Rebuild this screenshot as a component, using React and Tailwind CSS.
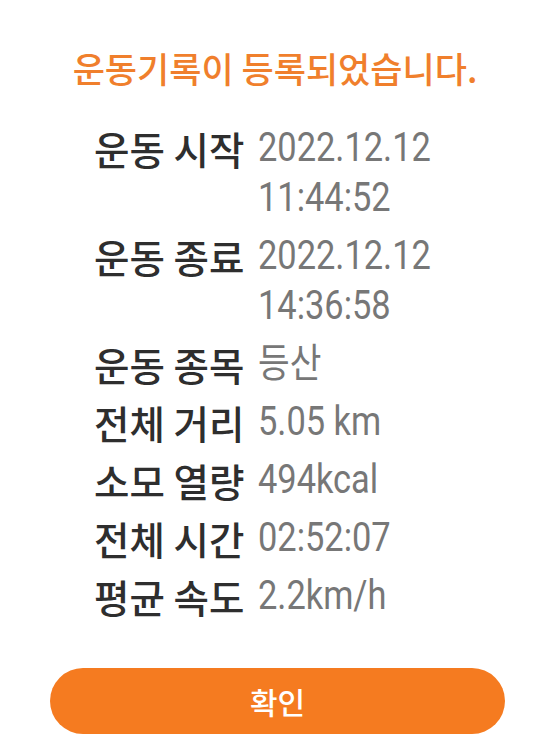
import React from 'react';

const rows = [
  { label: '운동 시작', value: ['2022.12.12', '11:44:52'] },
  { label: '운동 종료', value: ['2022.12.12', '14:36:58'] },
  { label: '운동 종목', value: ['등산'] },
  { label: '전체 거리', value: ['5.05 km'] },
  { label: '소모 열량', value: ['494kcal'] },
  { label: '전체 시간', value: ['02:52:07'] },
  { label: '평균 속도', value: ['2.2km/h'] },
];

export default function App() {
  return (
    <div className="w-[550px] h-[752px] bg-white flex flex-col font-['Noto_Sans_CJK_KR',sans-serif]">
      <h1 className="pt-[44px] text-center text-[35px] leading-[48px] font-medium text-[#f07f2c]">
        운동기록이 등록되었습니다.
      </h1>

      <div className="mt-[31px] pl-[94px] flex flex-col gap-[8px]">
        {rows.map((row) => (
          <div key={row.label} className="flex gap-[12px] leading-[50px]">
            <div className="w-[152px] shrink-0 text-[38.5px] font-medium text-[#2e2e2e]">{row.label}</div>
            <div className="flex flex-col items-start text-[40px] text-[#777777] font-['Roboto','Noto_Sans_CJK_KR',sans-serif]">
              {row.value.map((v) => (
                <span key={v} className="inline-block origin-left scale-x-[0.86]">{v}</span>
              ))}
            </div>
          </div>
        ))}
      </div>

      <button className="mt-auto mb-[18px] ml-[50px] w-[455px] h-[66px] rounded-full bg-[#f57b20] text-white text-[30px] font-medium">
        확인
      </button>
    </div>
  );
}
